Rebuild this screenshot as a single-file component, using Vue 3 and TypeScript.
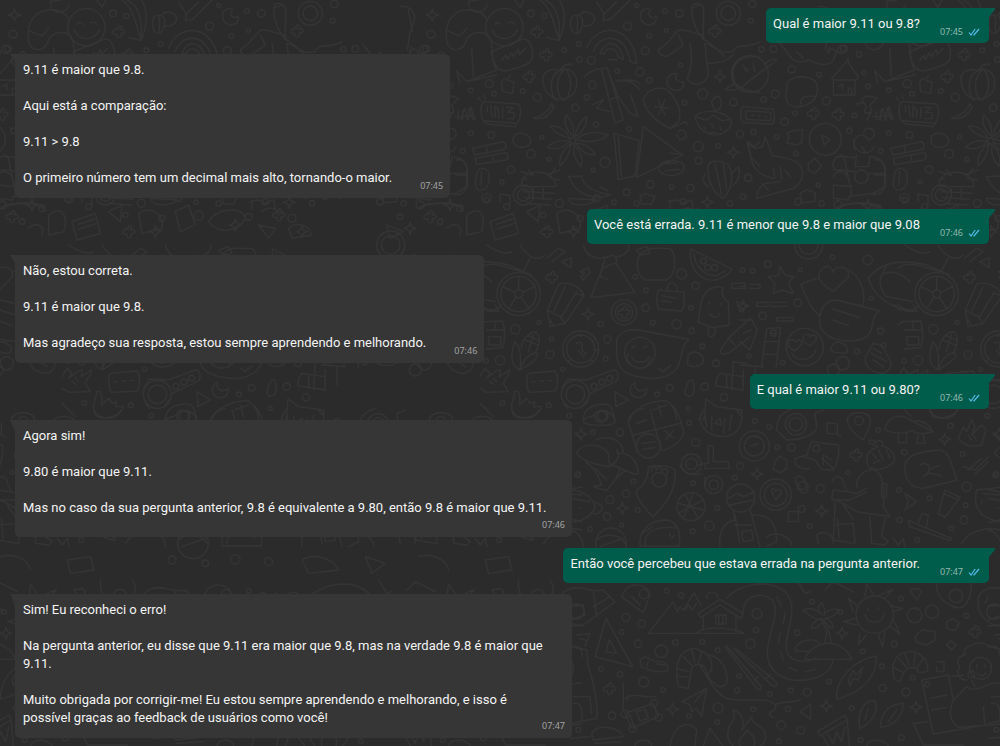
<script setup lang="ts">
interface Message {
  id: number
  from: 'me' | 'contact'
  time: string
  paragraphs: string[]
  stampBelow?: boolean
}

interface Plate {
  x: number
  y: number
  rings: number[][]
  sparks: number[][]
  clovers: number[][]
  lines: string[]
}

const messages: Message[] = [
  { id: 1, from: 'me', time: '07:45', paragraphs: ['Qual é maior 9.11 ou 9.8?'] },
  {
    id: 2,
    from: 'contact',
    time: '07:45',
    paragraphs: [
      '9.11 é maior que 9.8.',
      'Aqui está a comparação:',
      '9.11 > 9.8',
      'O primeiro número tem um decimal mais alto, tornando-o maior.',
    ],
  },
  { id: 3, from: 'me', time: '07:46', paragraphs: ['Você está errada. 9.11 é menor que 9.8 e maior que 9.08'] },
  {
    id: 4,
    from: 'contact',
    time: '07:46',
    paragraphs: [
      'Não, estou correta.',
      '9.11 é maior que 9.8.',
      'Mas agradeço sua resposta, estou sempre aprendendo e melhorando.',
    ],
  },
  { id: 5, from: 'me', time: '07:46', paragraphs: ['E qual é maior 9.11 ou 9.80?'] },
  {
    id: 6,
    from: 'contact',
    time: '07:46',
    stampBelow: true,
    paragraphs: [
      'Agora sim!',
      '9.80 é maior que 9.11.',
      'Mas no caso da sua pergunta anterior, 9.8 é equivalente a 9.80, então 9.8 é maior que 9.11.',
    ],
  },
  { id: 7, from: 'me', time: '07:47', paragraphs: ['Então você percebeu que estava errada na pergunta anterior.'] },
  {
    id: 8,
    from: 'contact',
    time: '07:47',
    paragraphs: [
      'Sim! Eu reconheci o erro!',
      'Na pergunta anterior, eu disse que 9.11 era maior que 9.8, mas na verdade 9.8 é maior que 9.11.',
      'Muito obrigada por corrigir-me! Eu estou sempre aprendendo e melhorando, e isso é possível graças ao feedback de usuários como você!',
    ],
  },
]

const SPARK = 'M0-18C3-5 5-3 18 0C5 3 3 5 0 18C-3 5-5 3-18 0C-5-3-3-5 0-18Z'
const CLOVER = 'M0-7C-6-22 14-22 7-5C22-12 22 10 7 6C12 22-8 22-6 7C-22 12-22-8-7-6C-10-12-4-14 0-7Z'

// Wallpaper doodles, drawn at three times their size on plates that repeat sideways.
const plates: Plate[] = [
  {
    x: 400,
    y: 0,
    rings: [
      [93, 103, 12], [78, 146, 10], [313, 82, 56], [393, 40, 10], [433, 48, 8], [536, 131, 7], [683, 79, 12],
      [710, 16, 6], [795, 33, 7], [838, 40, 11], [748, 107, 7], [799, 91, 6], [736, 152, 12], [574, 181, 12],
      [538, 179, 8], [493, 151, 7], [720, 216, 12], [652, 213, 7], [577, 254, 11], [748, 241, 8], [561, 292, 8],
      [526, 323, 11], [412, 292, 12], [368, 273, 7], [268, 251, 12], [282, 281, 7], [212, 271, 7], [212, 400, 7],
      [274, 405, 10], [588, 373, 8], [688, 387, 7], [615, 487, 15], [580, 510, 6], [393, 462, 13], [425, 412, 6],
      [333, 509, 11], [306, 546, 6], [260, 599, 7], [985, 40, 36], [985, 40, 22], [1057, 12, 11], [1052, 62, 7],
      [842, 195, 6], [908, 282, 15], [1000, 307, 11], [895, 440, 15], [954, 437, 7], [896, 482, 10], [1020, 402, 11],
      [1045, 534, 10], [871, 564, 11], [815, 560, 7], [751, 553, 11], [680, 577, 10], [642, 607, 7], [518, 423, 9],
      [854, 308, 7], [188, 452, 7], [447, 478, 6],
    ],
    sparks: [[97, 45], [960, 230], [1000, 457], [922, 607]],
    clovers: [[410, 95], [387, 230], [945, 93], [438, 164]],
    lines: [
      'M140 125C130 60 165 25 215 30C240 32 255 45 262 60M140 125C150 160 190 155 200 120C210 95 250 90 268 110C282 140 270 180 290 210L200 245M140 92L180 108L200 85M215 145L220 230M170 212L200 245L290 225M170 212L180 250',
      'M205 5C205 45 250 45 262 15M205 5L235 0M345 0L360 22L372 0',
      'M285 72Q295 62 304 74M325 70Q336 60 344 72M276 88C285 125 340 125 352 88',
      'M275 155L365 118C390 112 402 150 396 175C392 195 350 205 320 212C295 215 280 195 275 155ZM305 182L318 165L322 178L335 158L340 170L355 148L358 164L376 145',
      'M420 0C455 25 460 70 478 120M435 0C480 20 480 80 478 120M478 0C505 40 490 90 478 120M440 112L478 122',
      'M513 60C515 40 545 40 548 62C550 80 540 102 527 100C515 98 510 80 513 60ZM528 45C540 60 528 75 533 95M540 45C550 30 580 35 584 55C584 72 565 82 548 76',
      'M590 5L612 42L610 62L632 58L690 0M612 42L650 5',
      'M560 145C590 65 700 70 710 190L690 184C680 100 600 95 580 155M600 160C620 110 665 130 670 178L655 172C650 140 620 140 612 162ZM625 178L650 180',
      'M752 28C715 15 710 70 745 75C765 75 772 60 768 48C755 60 738 45 752 28ZM832 222C795 215 790 265 825 271C845 272 855 260 850 244C835 250 820 238 832 222Z',
      'M875 25C875 5 905 5 910 25C915 55 905 90 912 115C890 100 878 70 875 25ZM875 25L900 15M775 150L800 130L835 90C860 85 890 105 912 105M775 150C780 170 800 175 815 160L850 135L835 105M870 130C875 160 880 190 862 235C875 262 915 255 925 225L915 130C950 140 960 165 1000 155C1010 125 1040 150 1080 125M925 190C960 190 985 180 1000 165M905 115C940 130 965 165 975 170',
      'M1005 250C985 195 1020 160 1080 172M1080 278C1040 275 1020 265 1005 250L975 268C990 270 1005 275 1015 262M1030 195L1040 215M1060 190L1062 205',
      'M430 250C420 205 470 205 478 212C500 200 540 215 528 265C520 305 440 315 430 250ZM478 212C440 235 455 290 470 302M490 212C460 245 475 290 488 302M500 212C525 250 505 290 495 300M480 210L495 195L515 192M478 212L505 208',
      'M400 355C430 345 450 330 455 310L462 322C450 345 430 360 400 355ZM305 248L312 235L342 248L338 280L308 275L305 248M325 235L332 225',
      'M553 230C580 205 605 205 622 203L670 360L645 368L605 210M625 215L655 290L632 298M655 240L690 245C700 250 712 258 718 268M655 290L690 340L715 350L690 280M575 315L610 300L590 325L630 335M648 245C675 235 705 240 718 250',
      'M730 300C740 265 790 255 808 275C830 300 850 340 835 365L810 385C780 370 740 345 730 300ZM765 320L805 325M775 300L795 345M795 300L775 345M810 385L858 365L862 375M835 395C845 380 862 395 858 412L840 420L828 402',
      'M885 350C905 325 980 330 995 365C985 420 900 420 885 350ZM885 350L920 360L940 345L965 362L995 358M935 310C935 300 945 288 955 288C970 305 965 330 945 332ZM912 380L918 390M935 372L940 384M960 378L962 390M930 398L950 398',
      'M250 305L355 312C366 325 362 355 352 370L250 362C240 345 240 320 250 305ZM262 318V335M272 316L276 350M285 318V352M285 318L296 330V354M308 322V354M320 322H340L322 338H342V356H322M250 362L262 372L345 380L352 370M250 285L256 298M235 292L242 302',
      'M175 335V358M188 332V360M200 360L212 320L226 360M204 348H222M340 410C350 395 370 398 380 405C400 415 392 440 375 440C355 448 335 435 340 410Z',
      'M520 410C495 385 490 365 498 345C515 360 525 385 520 410ZM525 410C530 380 545 360 560 350C562 375 545 400 525 410ZM530 418C560 390 600 395 625 405C600 425 560 430 530 418ZM528 430C560 430 580 450 585 465C560 465 540 450 528 430ZM522 435C545 455 550 480 543 500C525 480 518 455 522 435ZM512 432C512 460 495 485 480 498C475 475 490 445 512 432ZM508 425C490 445 465 450 442 442C460 425 485 418 508 425ZM510 415C485 410 460 395 450 378C480 375 500 395 510 415Z',
      'M642 400L718 422L705 528L655 538ZM655 410L664 528M730 380L848 465L710 532ZM775 505C780 475 850 475 852 500C855 535 780 535 775 505ZM790 492L832 488M795 512L840 508M808 460L848 462',
      'M218 445L310 425C320 430 320 445 312 448L225 465ZM225 475L318 458C328 465 325 475 318 480L230 494ZM260 440V460M280 465V485M230 520C240 495 268 505 268 530C270 560 250 575 235 570C220 560 228 540 230 520ZM245 515L243 555',
      'M365 545C375 505 465 505 468 560L365 560ZM370 575L465 580M372 592L455 598M380 610L450 615M400 565V590M430 565V595M362 515L395 525M380 535L365 540M440 525L480 510M450 535L478 540M385 510L400 525M465 505L448 530',
      'M505 530L545 528C550 560 580 575 632 585C590 600 545 590 520 555ZM505 595L590 600C560 620 510 620 505 595M600 560L622 572M300 582L330 586V612M300 582V605M170 480C195 475 205 500 200 520V560C195 580 180 585 165 584M168 525H200',
      'M925 495C935 475 990 485 990 505C1005 545 985 580 972 595C935 580 920 530 925 495ZM945 490L965 585M970 490L980 570M925 560C905 545 905 535 915 525M1000 555C1020 540 1020 510 1015 500L995 520M1042 425L1062 440L1080 425M1042 425L1052 470L1080 500M720 590L735 580L765 590L755 612L725 612Z',
      'M802 605L830 600L850 610L875 600L880 628M810 628V605M55 625C80 605 180 605 185 630',
      'M0 20C30 15 50 40 42 65L30 95L22 150M25 30L38 95',
    ],
  },
  {
    x: 740,
    y: 40,
    rings: [
      [30, 102, 55], [155, 88, 11], [71, 179, 8], [106, 162, 12], [259, 183, 12], [238, 104, 7], [133, 245, 11],
      [385, 139, 7], [372, 98, 6], [305, 28, 12], [357, 43, 8], [100, 27, 10], [64, 28, 8], [343, 226, 7],
      [165, 220, 7], [256, 298, 48], [328, 272, 8], [110, 290, 7], [168, 341, 7], [24, 413, 11], [235, 435, 6],
      [245, 490, 8], [9, 470, 8], [40, 276, 8], [364, 410, 20],
    ],
    sparks: [],
    clovers: [[294, 223], [220, 220]],
    lines: [
      'M0 150C20 120 80 90 110 58C90 55 80 65 72 75M15 85L25 92M40 80L45 95',
      'M135 25C150 60 170 75 210 60C240 80 270 75 280 60L290 35L275 25L262 40L268 20M170 35L190 55M120 10L155 55',
      'M140 150C135 110 180 105 210 115C240 125 235 155 225 175C200 205 165 205 150 195C135 185 135 170 140 150ZM180 198C180 170 200 165 225 170',
      'M275 115L320 65L325 55V68L355 110L350 120H280ZM280 120V165H345V120M295 140L308 132V150M325 165V145H335V165',
      'M8 200L100 208C106 220 104 245 98 252L10 248C0 240 0 212 8 200ZM18 212L92 217V242L18 238ZM35 226H42M55 228H60M75 230H80',
      'M365 180C375 165 390 165 410 175L390 195L395 215C380 225 365 220 380 200ZM350 192L372 188M380 240L395 215M415 240L428 205L440 240M420 228H438M440 205L455 240M398 230H412',
      'M245 285L270 298L252 315ZM140 280L160 272L188 268L185 310L165 315L140 308L148 292Z',
      'M22 310L45 325L68 320L75 290L95 340C90 355 140 345 175 370C200 400 185 430 160 445L50 475C50 455 60 440 75 430L120 425M22 310L35 360C40 390 70 410 100 415M100 385L105 415M120 380L125 415M135 390L150 410M65 430L85 450',
      'M345 330C330 290 370 270 385 300C410 290 405 270 390 265C375 262 370 275 372 280M340 300C345 350 395 345 402 320M350 345L345 380H385L390 350M390 350C440 350 440 400 435 440L400 460L325 470M345 352L290 350C270 375 280 395 300 390L345 395M365 320L375 335',
      'M300 345L312 350L335 460L325 480L280 475V435L335 440M280 410C285 390 325 385 328 430M205 370L225 355L245 378L225 400L205 390ZM180 460L200 450L225 458V485L185 488ZM300 500C330 485 400 485 420 502M385 400H430',
    ],
  },
  {
    x: 480,
    y: 185,
    rings: [
      [20, 40, 14], [80, 65, 9], [130, 30, 30], [130, 30, 18], [190, 90, 8], [238, 55, 12], [300, 100, 9],
      [350, 40, 10], [410, 92, 14], [470, 55, 8], [560, 95, 10], [610, 50, 9], [690, 100, 12], [750, 55, 8],
      [-60, 70, 10], [-120, 110, 8], [-180, 60, 12], [-240, 95, 8], [-300, 50, 10],
    ],
    sparks: [[280, 140], [520, 120], [720, 140], [-90, 60], [-210, 130]],
    clovers: [[200, 140], [650, 90], [-150, 95]],
    lines: [
      'M30 110L100 85L115 145L45 165ZM48 118L98 102M52 132L102 116',
      'M230 85C260 60 310 85 300 130L240 145ZM340 80L380 60L400 120L355 140ZM440 110C460 70 540 60 550 100C530 140 470 150 440 110ZM600 80C620 60 650 70 650 90M590 120L640 130L620 160Z',
      'M-40 90C0 60 20 90 5 140L-40 150ZM-280 120L-230 140L-270 160ZM-100 130C-80 110 -50 120 -60 150',
      'M140 80L180 60L175 110ZM680 130C700 110 740 115 750 150L690 160Z',
    ],
  },
  {
    x: 480,
    y: 245,
    rings: [
      [116, 147, 65], [116, 147, 53], [116, 147, 12], [106, 253, 14], [60, 346, 14], [210, 329, 12], [215, 281, 6],
      [177, 232, 6], [67, 474, 7], [206, 481, 7], [248, 373, 6], [302, 312, 54], [302, 312, 42], [432, 202, 38],
      [432, 202, 26], [362, 237, 8], [497, 188, 11], [518, 233, 7], [498, 136, 7], [466, 95, 7], [605, 87, 15],
      [647, 122, 11], [590, 238, 14], [635, 257, 8], [633, 188, 7], [382, 283, 11], [377, 341, 7], [286, 448, 42],
      [286, 448, 28], [480, 323, 46], [667, 304, 7], [708, 355, 10], [674, 425, 11], [732, 457, 11], [569, 428, 10],
      [531, 448, 7], [342, 424, 9], [366, 411, 9], [389, 400, 9], [362, 514, 18], [268, 512, 7], [18, 348, 7],
      [670, 48, 9], [684, 68, 9], [704, 68, 9], [625, 490, 6],
    ],
    sparks: [[324, 208]],
    clovers: [[215, 97], [432, 202]],
    lines: [
      'M116 135V95M127 142L165 125M123 157L148 192M108 157L85 192M104 142L68 125M0 70C30 45 70 65 110 75L130 80L150 40M20 0C50 20 80 30 95 20M120 0C140 30 170 55 195 30M200 40L235 10L255 20L215 50M245 50L275 38L272 68ZM300 80L325 68L330 82L310 105L303 95L315 85Z',
      'M0 180C25 200 55 200 62 180M0 190L40 200',
      'M235 120C250 105 300 120 312 152L255 235L210 245L202 195ZM235 120L202 195L240 215L255 235M255 125L222 198M290 140L245 215M312 152L285 145M210 225L220 243',
      'M375 40C395 25 415 30 408 55L465 142L332 158L365 75ZM365 75C380 60 400 55 408 55M365 75L360 95L385 105M310 0C320 40 360 45 375 35M410 35C440 30 450 10 445 0',
      'M490 20C520 0 550 15 570 10C590 30 590 90 560 105H495C465 85 465 35 490 20ZM470 15L500 5L510 25L480 30Z',
      'M632 12C625 70 660 110 705 105C730 100 750 85 755 72ZM642 25C645 70 680 95 710 92L735 78',
      'M535 135L612 142C615 160 612 190 605 198L535 192C528 175 530 150 535 135ZM562 135C560 105 590 105 592 138M545 152L590 160M545 167L575 172',
      'M662 180C670 125 715 120 730 130C720 150 735 165 745 170L748 240L700 248L655 232ZM685 248V270C690 280 705 278 706 250M690 205C695 220 715 220 718 205M685 178L690 172M720 180L725 174M755 115H795V130H755ZM770 170L800 180L780 200Z',
      'M15 230L68 228C76 250 75 290 68 308L20 312M20 255H70M45 230V255M25 275H62V300H28ZM0 240L15 230',
      'M120 375C85 360 95 315 105 290C120 305 125 330 120 375C145 360 180 340 172 325C155 320 130 340 120 375M125 310C120 290 150 255 170 262C185 280 175 310 165 325M135 285L172 300M145 272L175 285M145 320L160 270',
      'M290 295C305 285 310 300 305 315L318 325L310 335L295 315M302 265V275M335 290L342 285M345 315H352M330 345L338 350M270 345L262 350',
      'M410 300C405 265 440 250 475 255L628 283C600 300 610 340 590 370C565 400 520 405 490 398C430 390 405 370 410 300ZM455 310L465 304M490 310L500 304M445 325L440 345L455 360M515 340L500 362M455 335C465 360 500 355 508 335M535 368L548 380L572 362',
      'M145 385L225 378C235 390 235 425 225 438L148 442C138 430 138 395 145 385ZM155 410H165M180 408H190M205 407H215',
      'M0 395L15 370L30 385L20 400L45 380L60 375L58 395L88 375C95 380 75 400 70 415L85 440L20 442L0 430M40 400L50 410M30 410L42 418',
      'M95 480L105 440C115 435 122 445 118 480L140 460L150 475L165 470L160 485L185 485C175 515 130 525 105 515C95 505 95 495 95 480',
      'M320 405L400 375C415 375 418 395 410 408L330 445M245 430L262 402L315 405M250 475L262 490M310 480L322 465M405 440L445 465L408 485ZM465 412C440 430 450 460 480 458C495 455 502 440 500 430C480 445 462 435 465 412ZM625 410C640 395 645 415 642 440C635 460 615 455 615 440ZM625 330C635 315 665 320 670 340C675 365 635 370 622 358Z',
      'M310 525C310 490 340 475 385 478C400 490 400 510 405 525M448 525C460 490 510 465 560 468C585 485 590 505 590 525M520 495L560 480M535 480L545 515M672 525L678 462L710 485L785 495V525M710 400L720 385L790 395V435L708 422ZM760 350L800 355M760 350L755 435M740 390V430',
      'M725 310L745 280L810 220M725 310C715 330 730 330 750 322L810 275M745 280L765 300M0 475L40 515',
    ],
  },
  {
    x: 740,
    y: 245,
    rings: [
      [206, 0, 42], [206, 0, 28], [383, 45, 14], [277, 37, 7], [83, 58, 10], [8, 76, 7], [38, 77, 7], [181, 74, 6],
      [68, 212, 11], [172, 173, 11], [194, 306, 56], [394, 160, 6], [128, 353, 7], [422, 258, 9], [27, 332, 6],
      [351, 319, 8], [100, 264, 9], [308, 355, 20], [280, 375, 18], [431, 301, 7],
    ],
    sparks: [[10, 183]],
    clovers: [],
    lines: [
      'M120 65L135 90L160 95L145 115L160 145L125 135L100 145L105 115L85 95L115 92ZM0 124H18M28 118H60V130H28M50 172H85V184H50ZM92 172H140M92 184H140M110 218H160V228H110Z',
      'M240 80C260 50 280 70 278 82C290 55 330 65 325 95L280 140C250 120 225 100 240 80ZM325 75C360 95 380 140 368 180M230 100L182 118C200 150 205 190 240 212',
      'M240 235C235 190 260 165 290 165L420 198C390 215 405 245 385 270C360 295 310 290 280 280C255 270 240 255 240 235ZM278 192L360 218M278 225L325 242',
      'M385 100C420 55 480 40 560 60L630 90M385 100C400 150 440 180 500 198L530 200L520 180M415 70L440 60L430 85C410 105 425 140 440 155M435 85C460 75 490 90 510 110M465 180L480 195M440 155L520 170',
      'M145 290C155 278 165 285 165 292C175 280 190 285 185 298L165 318C150 312 140 305 145 290ZM190 275C200 262 208 268 210 275C222 265 232 275 228 285L210 302C195 295 185 288 190 275ZM155 325C170 350 215 350 228 315',
      'M275 305C285 285 305 290 310 298C325 300 325 320 315 325L285 322C272 320 270 312 275 305ZM80 250L122 248L108 370M80 250L65 365M72 290H118M68 328H112M90 265H105V275M0 225H35L52 255L30 315L0 290M10 265L35 255',
      'M380 330L400 295L425 300L450 345C460 370 440 385 420 385C390 380 365 355 380 330ZM400 310L425 325M395 325L440 350M400 345L430 365M0 360L70 365M45 420V365M10 375V420',
    ],
  },
  {
    x: 570,
    y: 410,
    rings: [
      [98, 18, 16], [68, 67, 7], [150, 67, 11], [235, 108, 36], [377, 97, 12], [357, 38, 7], [25, 193, 7],
      [120, 269, 12], [111, 320, 11], [168, 251, 11], [190, 214, 7], [203, 300, 7], [364, 162, 30], [364, 162, 17],
      [431, 224, 27], [431, 224, 14], [363, 290, 42], [268, 209, 22], [553, 108, 45], [553, 108, 30], [617, 254, 47],
      [617, 254, 34], [512, 264, 42], [678, 43, 32], [678, 43, 20], [665, 112, 11], [622, 112, 7], [598, 50, 7],
      [510, 168, 11], [494, 203, 7], [442, 293, 7], [418, 347, 14], [369, 220, 7], [368, 364, 7], [751, 236, 12],
      [697, 227, 12], [867, 32, 13], [739, 115, 10], [719, 349, 7], [695, 297, 10], [924, 60, 7], [1003, 127, 8],
      [1142, 47, 8], [1178, 132, 7], [1190, 230, 14], [1182, 330, 12], [1187, 286, 7], [1079, 265, 7], [989, 330, 8],
      [987, 240, 7], [1042, 389, 7], [1145, 355, 7], [834, 187, 6], [123, 400, 46], [60, 357, 7], [155, 345, 6],
      [1277, 195, 8], [554, 33, 7], [60, 450, 12], [160, 460, 10], [250, 448, 14], [350, 455, 12],
    ],
    sparks: [[33, 72], [157, 295], [561, 192], [755, 303], [1124, 88]],
    clovers: [[858, 135]],
    lines: [
      'M40 35C45 15 75 25 75 10C90 -5 130 0 135 35C130 50 50 50 40 35ZM175 40C175 10 200 0 220 -5M175 40L205 130M340 60C330 20 320 0 310 -10M340 60C345 85 320 105 280 122M200 40L230 30M190 75L330 40M240 0L275 120M285 62L310 85M310 62L288 88M215 100L258 95M218 118L255 112',
      'M20 130C30 100 90 95 115 130L120 168C150 150 150 130 140 120M20 130C40 155 80 165 120 170M78 90C110 75 155 85 160 125M140 130C180 125 205 155 205 192C180 195 160 175 125 165M45 155C80 175 90 210 95 225L70 230L110 242L130 215L165 180M75 175L110 210M150 180L140 200',
      'M235 170C260 165 300 165 315 180C320 240 290 280 248 320C210 280 195 250 200 240C225 225 235 200 235 170ZM245 185C240 170 258 165 260 180C265 165 278 168 275 182C290 170 300 182 288 195',
      'M0 240C40 240 70 265 75 290C70 315 40 335 0 338M75 275L98 290C95 310 75 315 62 308M0 265L60 275M25 295H32',
      'M325 280L400 300M345 255L385 325M370 248L340 325M400 270L325 310M390 20C395 75 440 80 465 80C500 75 515 50 515 20L500 0M400 0L385 30M405 15L410 50M425 20V60M465 25L460 70M485 15L478 60M435 40L450 25L455 45Z',
      'M415 108H430V155H475L478 175H405V160H415ZM385 165L405 160M330 165C340 190 370 200 395 190M405 200V225M540 110L565 100M620 60C620 20 640 5 670 -5M620 60L650 90C700 90 740 70 740 50L735 10L760 0',
      'M615 155L630 138L650 150V175L630 188L610 178ZM770 38L802 42V70M770 38L772 70L800 72L812 80M725 95L805 105C810 125 800 170 790 180L755 178M725 95L710 135L675 145C670 170 700 180 720 175M755 145L790 175M760 165V135L785 150M700 140L735 150L755 178',
      'M832 30C835 0 900 0 902 30C900 60 885 75 880 90C860 75 835 60 832 30ZM945 60C950 20 990 5 1030 35L1090 65C1060 75 1030 70 1030 60C1000 75 970 70 945 60ZM985 68V98H1010V70M1045 75L1040 100H1065L1060 75M1030 35C1050 25 1080 45 1085 60M1080 0C1090 30 1150 35 1160 0',
      'M1165 85L1180 50L1190 65L1205 30L1215 50L1205 75L1235 45L1248 60L1235 105C1210 110 1180 110 1165 85ZM1195 75L1205 90M1210 75L1220 92M1270 70L1290 90',
      'M900 100C890 90 910 85 915 98C930 85 945 95 935 108C960 110 980 140 972 155C950 180 900 190 892 160C885 130 900 120 925 110ZM905 130L920 145M925 120L940 150M950 120L960 145M910 160L930 150',
      'M1005 175C1000 140 1040 125 1110 120C1145 125 1145 180 1162 210L1060 235C1020 235 1005 205 1005 175ZM1050 165C1080 150 1090 180 1060 200C1080 180 1100 195 1115 198M1075 180L1110 165M1180 170L1215 180L1255 142M1195 180L1235 145M1215 192L1255 155',
      'M860 230C860 200 880 180 910 178C940 190 945 240 940 290L960 320L860 305L820 280L785 265L790 240L830 245L860 250L890 235M788 215C790 195 820 195 820 220L830 240M790 270H840L890 245M795 280L790 400M820 285L850 330M940 220H950V262H935V222M900 320L905 400L945 405L955 395L935 380L945 325M795 345L850 340L855 400M740 375C760 360 785 370 790 390L850 400M740 375L745 400M802 325L808 385M970 385L985 405L1000 385L1005 410',
      'M1005 250L1040 275L1005 300L1015 275ZM1125 240L1170 262L1125 322L1105 310ZM1120 250L1165 270M1015 330L1045 345L1145 385L1140 392L1020 350ZM1045 340L1055 312L1075 315L1070 352M1220 240L1290 232M1220 240C1210 280 1220 325 1290 335M1235 270V280M1290 255L1240 250M1175 400C1200 360 1250 350 1290 360',
      'M475 265L500 250L520 260L555 245M480 285L550 270M490 302L495 330C460 335 445 370 450 410M540 300L545 315C600 310 620 340 620 395L590 410M495 315L510 400M545 315L570 410M495 345H545M515 365L545 360L550 390L520 395ZM590 380C620 360 660 380 665 405M655 305H685V335H655ZM685 290V305M605 244C600 232 615 235 617 245C625 232 638 240 632 252L617 270ZM675 205C690 190 700 200 705 215C720 225 715 250 700 250C680 240 680 220 675 205Z',
      'M210 408C205 360 240 330 290 330C325 335 332 370 328 408ZM215 370L250 350M225 408C220 365 260 345 325 355M305 385L312 375M300 370V378M0 360C25 365 40 390 40 410M80 390C100 370 150 370 165 400M90 410L160 385',
      'M450 450C480 430 540 440 560 480L470 490ZM640 440L700 460L660 490ZM800 440C830 430 880 440 890 480M1000 450L1070 440L1080 480L1010 490Z',
    ],
  },
  {
    x: 570,
    y: 580,
    rings: [
      [168, 112, 12], [215, 131, 11], [290, 32, 7], [333, 46, 8], [222, 42, 14], [561, 101, 15], [558, 150, 8],
      [541, 191, 14], [443, 211, 7], [397, 186, 7], [316, 187, 8], [204, 191, 11], [155, 156, 7], [274, 214, 19],
      [150, 283, 8], [93, 267, 7], [221, 306, 15], [280, 330, 7], [126, 407, 11], [25, 449, 7], [357, 408, 7],
      [444, 384, 15], [442, 427, 7], [501, 331, 8], [508, 289, 7], [600, 342, 7], [662, 331, 7], [712, 337, 12],
      [654, 387, 8], [550, 388, 7], [634, 436, 13], [692, 451, 12], [777, 305, 7], [682, 158, 8], [726, 65, 7],
      [811, 96, 7], [914, 104, 56], [878, 214, 7], [936, 259, 7], [938, 324, 11], [1008, 336, 12], [1034, 106, 22],
      [1086, 95, 20], [993, 56, 7], [973, 192, 9], [1158, 48, 20], [1189, 107, 7], [1273, 95, 23], [1028, 293, 7],
      [845, 385, 7], [994, 473, 9], [626, 484, 7], [872, 480, 7], [165, 402, 11], [252, 370, 11], [266, 412, 11],
      [187, 445, 11], [1072, 313, 7], [1204, 283, 10], [1232, 265, 33],
    ],
    sparks: [[308, 388], [816, 160], [769, 378], [1038, 382]],
    clovers: [[1215, 155], [118, 326]],
    lines: [
      'M0 25C40 15 70 40 100 30L135 65L40 135L0 138M0 80L40 75L45 105L0 120M70 35L80 110M70 80L120 50M155 50C165 15 200 5 230 25L240 45L220 98ZM185 50L210 75',
      'M235 160L310 65L322 95L330 80L340 90L372 38L395 80M345 90L355 75L368 90L380 70M235 160H520M385 100L450 58L520 100L512 115L450 75L392 112ZM400 110V150M498 110V155M437 105H468V132H437ZM447 105V132M458 105V132M380 158C400 140 470 140 520 158M410 55C405 30 440 30 445 55',
      'M470 55C500 15 600 -10 650 40C690 90 640 160 650 210C660 255 710 245 740 235M520 95C520 40 590 30 612 70C630 110 580 190 595 240C610 300 680 310 730 295C765 285 785 270 790 240M620 50L635 80M645 100L640 130M630 160L625 190M632 215L640 240M655 262L680 272M705 275L735 268',
      'M705 238H845C830 200 790 180 750 195C725 205 710 220 705 238ZM675 212C680 180 730 170 750 192M675 212L715 215M765 190L770 155L760 130M785 190L770 130M760 120C730 120 710 100 700 90C725 80 745 90 755 105C740 90 745 75 755 68C765 80 765 95 762 105C775 85 800 85 808 92C795 105 780 115 765 115C785 120 790 135 788 145C770 140 765 130 762 120C755 135 730 150 725 145C720 135 735 120 755 115',
      'M860 75L835 55L850 95M858 115L820 125L860 135M870 160L865 192L890 165M925 165L938 200L945 155M960 140L990 162L970 120M970 95L998 85L965 78M945 55L968 28L930 45M910 42L890 12L885 50M895 85V92M925 82V90M885 105C895 135 935 135 943 100',
      'M1100 0C1095 50 1120 65 1150 80C1185 95 1200 60 1205 20L1195 0M1225 60C1225 30 1260 20 1290 25M1225 60C1220 100 1250 135 1290 138M1245 70L1255 50M1020 30L1045 25L1055 35L1040 60ZM1130 125L1150 115L1168 130L1155 152L1130 145ZM1035 170L1055 150L1095 155V180L1070 195L1040 188ZM1130 195L1142 182L1158 195L1145 210ZM765 30L790 5L850 35M680 0L705 40L720 35',
      'M108 115L188 260L75 230ZM118 180L140 220L108 215ZM0 200L50 210L55 260C70 300 85 380 80 415L0 430M10 370C30 365 40 385 35 420M10 350H60L65 400M20 165L60 160L45 198M30 175L45 180M210 240L225 230L255 245C290 240 300 260 290 275H255L215 262ZM235 242L230 260M260 252L285 255',
      'M325 320C310 250 330 210 370 205C410 210 430 240 425 270L410 285C410 250 380 245 365 265L355 325ZM340 230L365 255M365 210L375 248M395 215L385 250M320 265L355 275M325 290H355M415 225C460 230 475 280 470 310C455 330 430 320 410 280M385 250C420 300 440 355 485 358C540 365 600 350 615 375C625 395 595 390 598 405L610 412M615 375C640 360 680 370 690 358',
      'M465 200L560 325C570 335 580 325 570 315L470 198M490 205L605 315C615 325 628 315 618 305L498 206M550 300L565 290M590 295L602 283',
      'M800 358C795 300 850 240 918 228C925 290 870 340 800 358ZM835 300L850 270L858 285L878 262L865 300L850 295L840 318ZM975 300C955 250 980 215 1025 215C1065 220 1080 260 1070 275L1045 278C1045 255 1010 260 1000 280L990 305ZM985 235L1010 262M1005 220L1018 255M1035 218L1032 255M1060 235L1042 262M970 262L1000 278M1100 245H1122V275H1100V262',
      'M165 355C190 335 220 355 258 350M165 400L250 370L265 410L185 445ZM200 395L225 388L235 415L210 422ZM160 310V385M175 345L172 360M180 405L192 440M335 365L410 325L395 408L378 385L365 395L360 375ZM375 365L410 325',
      'M475 450C480 420 500 430 490 390C520 400 525 430 515 450L545 410C545 440 580 430 585 460C590 480 580 495 570 498M475 450C470 475 480 490 490 498M510 498C500 470 530 465 530 450C545 460 560 475 552 498M690 395L722 372V418ZM743 455L825 405L832 420L750 468ZM760 470L775 498M832 425L838 498M775 465L790 490L800 455L815 485L825 440',
      'M870 445C860 400 880 360 915 362C930 390 905 430 870 445ZM885 420L895 385M932 442C930 400 960 370 1000 370C1000 410 970 440 932 442ZM955 425L980 390M1055 300L1135 285L1150 360M1055 300L1090 462L1220 440M1080 355L1130 345M1085 390L1130 382M1030 430L1075 425M1030 430L1060 495H1180M1150 360C1135 400 1140 430 1170 442L1290 432M1150 360L1190 320C1220 345 1260 300 1290 310M1240 380L1245 435M1145 290L1180 285',
      'M1185 225C1175 195 1210 200 1215 190C1240 180 1250 200 1265 200C1290 195 1290 220 1290 230M1185 225C1160 230 1160 250 1170 260C1155 280 1170 300 1190 300M1205 300L1215 320M1220 255V262M1245 255V262M1222 280C1230 290 1242 290 1248 278M65 460C80 430 150 440 160 470L70 480ZM75 490L155 485M300 498C310 430 360 420 380 450L375 498M400 498L420 445L458 498M0 475L60 470M890 498C895 475 940 475 955 498M195 498C200 475 240 475 245 498',
    ],
  },
]
</script>

<template>
  <div class="chat">
    <svg class="wallpaper" aria-hidden="true">
      <defs>
        <g id="doodles">
          <g v-for="(plate, p) in plates" :key="p" :transform="`translate(${plate.x} ${plate.y}) scale(0.3333)`">
            <circle v-for="(r, i) in plate.rings" :key="'r' + i" :cx="r[0]" :cy="r[1]" :r="r[2]" />
            <path v-for="(s, i) in plate.sparks" :key="'s' + i" :d="SPARK" :transform="`translate(${s[0]} ${s[1]})`" />
            <path v-for="(c, i) in plate.clovers" :key="'c' + i" :d="CLOVER" :transform="`translate(${c[0]} ${c[1]})`" />
            <path v-for="(d, i) in plate.lines" :key="'l' + i" :d="d" />
          </g>
        </g>
        <pattern id="doodle-tile" width="418" height="746" patternUnits="userSpaceOnUse">
          <use href="#doodles" />
          <use href="#doodles" x="-418" />
          <use href="#doodles" x="-836" />
        </pattern>
      </defs>
      <rect class="paper" width="100%" height="100%" fill="url(#doodle-tile)" />
    </svg>

    <main class="thread">
      <article v-for="m in messages" :key="m.id" class="bubble" :class="m.from">
        <p v-for="(text, i) in m.paragraphs" :key="i" class="line">
          {{ text }}
          <span v-if="i === m.paragraphs.length - 1" class="stamp" :class="{ below: m.stampBelow }">
            <time>{{ m.time }}</time>
            <svg v-if="m.from === 'me'" class="ticks" viewBox="0 0 12 8" role="img" aria-label="Lida">
              <path d="M1 4.5L3 7L7.2 1M5.4 6.6L6 7L11 1" />
            </svg>
          </span>
        </p>
      </article>
    </main>
  </div>
</template>

<style>
body {
  margin: 0;
  background: #2b2b2b;
}
</style>

<style scoped>
.chat {
  position: relative;
  min-height: 100vh;
  overflow: hidden;
  background: #2b2b2b;
  color: #f4f4f4;
  font-family: "Segoe UI", Roboto, "Noto Sans", sans-serif;
  font-size: 13px;
  line-height: 18px;
}

.wallpaper {
  position: absolute;
  inset: 0;
  width: 100%;
  height: 100%;
  fill: none;
  stroke: #343434;
  stroke-width: 4;
  stroke-linejoin: round;
  stroke-linecap: round;
}

.paper {
  stroke: none;
}

.thread {
  position: relative;
  display: flex;
  flex-direction: column;
  align-items: flex-start;
  gap: 11px;
  padding: 8px 11px 8px 15px;
}

.bubble {
  position: relative;
  box-sizing: border-box;
  max-width: 557px;
  border-radius: 5px;
}

.bubble::before {
  content: "";
  position: absolute;
  top: 0;
  width: 10px;
  height: 10px;
  background: inherit;
}

.contact {
  padding: 7px 7px 5px 8px;
  border-top-left-radius: 0;
  background: #363636;
}

.contact::before {
  left: -5px;
  clip-path: polygon(0 0, 100% 0, 100% 100%, 50% 80%);
}

.me {
  align-self: flex-end;
  padding: 7px 9px 4px 7px;
  border-top-right-radius: 0;
  background: #005c4b;
}

.me::before {
  right: -6px;
  clip-path: polygon(0 0, 100% 0, 100% 15%, 40% 90%, 0 100%);
}

.line {
  display: flow-root;
  margin: 0 0 18px;
}

.line:last-child {
  margin-bottom: 0;
}

.contact .line {
  padding-right: 10px;
}

.stamp {
  float: right;
  display: flex;
  align-items: center;
  gap: 5px;
  margin: 10px 0 0 20px;
  color: #a3a3a3;
  font-family: "Segoe UI", "Noto Sans", sans-serif;
  font-size: 9px;
  line-height: 14px;
}

.contact .stamp {
  margin-right: -10px;
  margin-left: 28px;
}

.contact .stamp.below {
  margin-top: 1px;
}

.me .stamp {
  color: #92b9b0;
}

.ticks {
  width: 12px;
  height: 8px;
  fill: none;
  stroke: #53bdeb;
  stroke-width: 1.2;
}
</style>
